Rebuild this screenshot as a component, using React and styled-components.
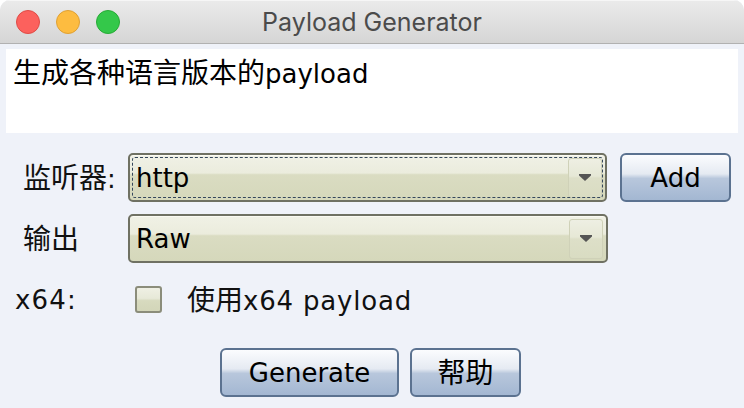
import React from 'react';
import styled, { createGlobalStyle } from 'styled-components';

const GlobalStyle = createGlobalStyle`
	html, body {
		margin: 0;
		padding: 0;
		background: #ffffff;
	}
	body {
		font-family: 'DejaVu Sans', 'Noto Sans CJK SC', sans-serif;
	}
`;

const Window = styled.div`
	width: 744px;
	height: 408px;
	background: #eff2f9;
	border-radius: 10px 10px 0 0;
	overflow: hidden;
	display: flex;
	flex-direction: column;
`;

const TitleBar = styled.div`
	height: 43px;
	flex: none;
	display: flex;
	align-items: center;
	position: relative;
	background: linear-gradient(#ebebeb, #d5d5d5);
	border-bottom: 1px solid #b1b1b1;
	box-shadow: inset 0 1px 0 #f6f6f6;
`;

const Lights = styled.div`
	display: flex;
	gap: 16px;
	padding-left: 16px;
`;

const Light = styled.span`
	width: 22px;
	height: 22px;
	border-radius: 50%;
	background: ${p => p.$fill};
	border: 1px solid ${p => p.$edge};
`;

const Title = styled.div`
	position: absolute;
	left: 0;
	right: 0;
	text-align: center;
	font-family: Inter, 'Liberation Sans', sans-serif;
	font-size: 25px;
	color: #4b4b4b;
	pointer-events: none;
`;

// Han glyphs are drawn a little larger than the Latin text in the dialog
const Han = styled.span`
	font-family: 'Noto Sans CJK SC', sans-serif;
	font-size: 28px;
	line-height: 1;
	letter-spacing: 0;
`;

const TextArea = styled.div`
	margin: 5px 6px 0;
	height: 84px;
	background: #ffffff;
	padding: 8px 7px;
	box-sizing: border-box;
	font-size: 26px;
	color: #000;
	line-height: 32px;
`;

const Form = styled.div`
	display: flex;
	flex-direction: column;
	padding-top: 20px;
`;

const Row = styled.div`
	display: flex;
	align-items: center;
	height: ${p => p.$h || 49}px;
	margin-top: ${p => p.$top || 0}px;
`;

const Label = styled.div`
	box-sizing: border-box;
	width: 128px;
	padding-left: ${p => p.$indent}px;
	font-size: 26px;
	letter-spacing: ${p => p.$track || 0}px;
	color: #111;
`;

const Combo = styled.div`
	box-sizing: border-box;
	width: ${p => p.$w}px;
	height: 49px;
	position: relative;
	display: flex;
	align-items: center;
	border: 2px solid #6f7163;
	border-radius: 5px;
	background: linear-gradient(#f0f1e6 0%, #ebecdd 40%, #dadcc2 44%, #d5d8bb 100%);
	box-shadow: inset 0 1px 0 #fafaf2;
	padding-left: 6px;
	font-size: 26px;
	color: #000;
`;

const Focus = styled.span`
	position: absolute;
	inset: 2px;
	border: 1px dashed #34475c;
	border-radius: 3px;
	pointer-events: none;
`;

const ComboText = styled.span`
	flex: 1;
`;

const ArrowBox = styled.span`
	width: 34px;
	height: 40px;
	margin-right: 3px;
	box-sizing: border-box;
	display: flex;
	align-items: center;
	justify-content: center;
	border: 1px solid #cfd1b8;
	border-radius: 3px;
	background: linear-gradient(#eeefe3 0%, #e6e8d6 45%, #dddfc8 50%, #d9dcc2 100%);
`;

const Button = styled.button`
	box-sizing: border-box;
	width: ${p => p.$w}px;
	height: 49px;
	margin-left: ${p => p.$left || 0}px;
	border: 2px solid #5b7290;
	border-radius: 6px;
	background: linear-gradient(#fbfcfe 0%, #e5eaf2 42%, #b8c7dc 52%, #a3b7d2 100%);
	font-family: 'DejaVu Sans', 'Noto Sans CJK SC', sans-serif;
	font-size: 26px;
	color: #000;
	padding: 0;
`;

const Check = styled.span`
	box-sizing: border-box;
	width: 27px;
	height: 27px;
	margin-left: 7px;
	border: 2px solid #8b8d7b;
	border-radius: 3px;
	background: linear-gradient(#eff0e4 0%, #e7e9d8 45%, #d7dabf 55%, #d3d6b9 100%);
`;

const CheckText = styled.span`
	margin-left: 25px;
	font-size: 26px;
	letter-spacing: 0.8px;
	color: #111;
`;

const ButtonRow = styled.div`
	display: flex;
	padding-left: 220px;
	margin-top: 35px;
`;

const Arrow = () => (
	<svg width="12" height="7" viewBox="0 0 12 7">
		<path d="M0 0h12v1.5L6 7 0 1.5z" fill="#555" />
	</svg>
);

export default function App() {
	return (
		<>
			<GlobalStyle />
			<Window>
				<TitleBar>
					<Lights>
						<Light $fill="#fc615d" $edge="#df4b46" />
						<Light $fill="#fdbc40" $edge="#dfa033" />
						<Light $fill="#34c84a" $edge="#27aa36" />
					</Lights>
					<Title>Payload Generator</Title>
				</TitleBar>
				<TextArea><Han>生成各种语言版本的</Han>payload</TextArea>
				<Form>
					<Row>
						<Label $indent={23}><Han>监听器</Han>:</Label>
						<Combo $w={479}>
							<Focus />
							<ComboText>http</ComboText>
							<ArrowBox><Arrow /></ArrowBox>
						</Combo>
						<Button $w={111} $left={13}>Add</Button>
					</Row>
					<Row $top={12}>
						<Label $indent={23}><Han>输出</Han></Label>
						<Combo $w={480}>
							<ComboText>Raw</ComboText>
							<ArrowBox><Arrow /></ArrowBox>
						</Combo>
					</Row>
					<Row $top={23} $h={27}>
						<Label $indent={15} $track={1.2}>x64:</Label>
						<Check />
						<CheckText><Han>使用</Han>x64 payload</CheckText>
					</Row>
					<ButtonRow>
						<Button $w={179}>Generate</Button>
						<Button $w={111} $left={11}><Han>帮助</Han></Button>
					</ButtonRow>
				</Form>
			</Window>
		</>
	);
}
